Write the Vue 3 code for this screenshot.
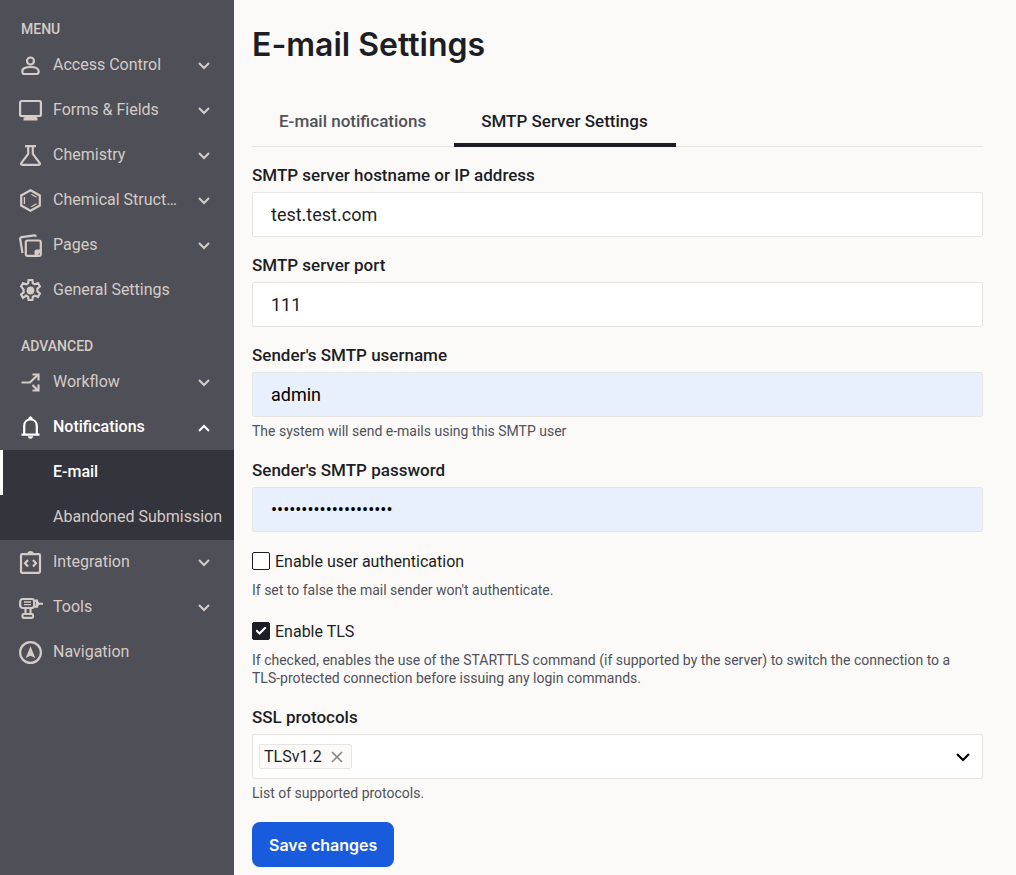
<script setup>
import { ref } from 'vue'

const menu = [
  { label: 'Access Control', icon: 'person', expandable: true },
  { label: 'Forms & Fields', icon: 'monitor', expandable: true },
  { label: 'Chemistry', icon: 'flask', expandable: true },
  { label: 'Chemical Struct…', icon: 'hexagon', expandable: true },
  { label: 'Pages', icon: 'pages', expandable: true },
  { label: 'General Settings', icon: 'gear' },
]
const advanced = [
  { label: 'Workflow', icon: 'workflow', expandable: true },
  {
    label: 'Notifications',
    icon: 'bell',
    expandable: true,
    open: true,
    children: [{ label: 'E-mail', current: true }, { label: 'Abandoned Submission' }],
  },
  { label: 'Integration', icon: 'integration', expandable: true },
  { label: 'Tools', icon: 'drill', expandable: true },
  { label: 'Navigation', icon: 'compass' },
]
const sections = [
  { title: 'Menu', items: menu },
  { title: 'Advanced', items: advanced },
]

const icons = {
  person:
    '<circle cx="11.5" cy="7" r="3.500"/><path d="M3.300 17.500c0-3.200 3.600-4.500 8.200-4.500s8.200 1.300 8.200 4.500c0 1.700-.8 2.500-2.200 2.500H5.500c-1.400 0-2.200-.8-2.200-2.500z"/>',
  monitor:
    '<rect x="1.100" y="2" width="20.800" height="15" rx="1.500"/><path class="solid" d="M5.500 17h12v1.500h1v3H4.500v-3h1z"/>',
  flask:
    '<path d="M6 2.200h11M9.200 2v8L2.400 18.900c-.8 1.200-.3 2 1 2h16.200c1.300 0 1.800-.8 1-2L13.800 10V2"/>',
  hexagon:
    '<path d="M11.500 1.300l9.300 5.200v10l-9.300 5.200-9.300-5.200v-10z"/><path class="thin" d="M5.400 8v7M12.300 5.200l5.300 3M12.300 17.800l5.300-3"/>',
  pages:
    '<rect x="6.800" y="6.500" width="15" height="15.300" rx="1.800"/><path class="solid" d="M22 15.500h-4.500q-2 0-2 2v5l2 0L22 17.500z"/><path d="M3.500 19L1.200 5.200q-.3-1.800 1.500-2.100L15.300 1.300q1.300-.2 1.600 1.500"/>',
  gear:
    '<path d="M9.600 1h3.800l.5 3.200 2 1.200 3.100-1.200 1.900 3.300-2.500 2.100v2.800l2.500 2.100-1.900 3.300-3.100-1.200-2 1.200-.5 3.200H9.600l-.5-3.200-2-1.200L4 18.800l-1.900-3.300 2.500-2.100v-2.800L2.100 7.500 4 4.200l3.100 1.200 2-1.200z"/><circle class="solid" cx="11.500" cy="11.500" r="3.900"/>',
  workflow:
    '<path d="M2.500 11.500h8.500l8-8"/><path d="M13.500 3.500h6v6M13.500 14l5.500 5.500M19.500 13.500v6h-6"/>',
  bell:
    '<path d="M2.500 18.700h18M5.200 18.500V10c0-4 2.700-6.500 6.300-6.500s6.300 2.500 6.300 6.500v8.500"/><path class="solid" d="M11.500 0l2.200 2v2H9.300V2zM8.800 20.200h5.400q-.6 2.600-2.700 2.600t-2.700-2.600z"/>',
  integration:
    '<rect x="2" y="3.200" width="19" height="18.600" rx="1.200"/><path d="M9 9l-3 3.300 3 3.300M14 9l3 3.300-3 3.300"/><path class="solid" d="M8 3q.5-3 3.500-3t3.500 3z"/>',
  drill:
    '<rect x="1.200" y="3" width="14" height="9" rx="2.500"/><path class="thin" d="M5 6h7M5 8.700h7"/><path d="M15.500 4.700h2.500v6h-2.500M6.500 12v6M11.500 12v6"/><path class="solid" d="M18 4.500l2.500 2.200H24v2h-3.500L18 10.900z"/><rect x="3.500" y="18" width="10.500" height="3.800" rx="1"/>',
  compass:
    '<circle cx="11.500" cy="11.500" r="10.400"/><path class="solid" d="M11.500 5.300l4.800 11.700-4.800-2.300-4.800 2.300z"/>',
}

const tabs = ['E-mail notifications', 'SMTP Server Settings']
const activeTab = ref(tabs[1])

const hostname = ref('test.test.com')
const port = ref('111')
const username = ref('admin')
const password = ref('abcdefghijklmnopqrst')
const authentication = ref(false)
const tls = ref(true)
const allProtocols = ['TLSv1.1', 'TLSv1.2', 'TLSv1.3']
const protocols = ref(['TLSv1.2'])
const nextProtocol = ref('')

function addProtocol() {
  if (nextProtocol.value && !protocols.value.includes(nextProtocol.value)) {
    protocols.value.push(nextProtocol.value)
  }
  nextProtocol.value = ''
}
function removeProtocol(name) {
  protocols.value = protocols.value.filter((p) => p !== name)
}
</script>

<template>
  <div class="page">
    <nav class="sidebar">
      <section v-for="section in sections" :key="section.title" class="group">
        <h2 class="group-title">{{ section.title }}</h2>
        <ul class="items">
          <li v-for="item in section.items" :key="item.label">
            <a href="#" class="item" :class="{ open: item.open }">
              <svg class="icon" viewBox="0 0 23 23" aria-hidden="true" v-html="icons[item.icon]"></svg>
              <span class="item-label">{{ item.label }}</span>
              <svg v-if="item.expandable" class="chevron" viewBox="0 0 12 12" aria-hidden="true">
                <path :d="item.open ? 'M1 9l5-5 5 5' : 'M1 3l5 5 5-5'" />
              </svg>
            </a>
            <ul v-if="item.children" class="submenu">
              <li v-for="child in item.children" :key="child.label">
                <a href="#" class="subitem" :class="{ current: child.current }">{{ child.label }}</a>
              </li>
            </ul>
          </li>
        </ul>
      </section>
    </nav>

    <main class="content">
      <h1 class="title">E-mail Settings</h1>
      <div class="tabs" role="tablist">
        <button
          v-for="tab in tabs"
          :key="tab"
          type="button"
          role="tab"
          class="tab"
          :class="{ active: tab === activeTab }"
          :aria-selected="tab === activeTab"
          @click="activeTab = tab"
        >{{ tab }}</button>
      </div>

      <form class="form" @submit.prevent>
        <div class="field">
          <label class="label" for="hostname">SMTP server hostname or IP address</label>
          <input id="hostname" v-model="hostname" class="input" type="text" />
        </div>
        <div class="field">
          <label class="label" for="port">SMTP server port</label>
          <input id="port" v-model="port" class="input" type="text" />
        </div>
        <div class="field">
          <label class="label" for="username">Sender's SMTP username</label>
          <input id="username" v-model="username" class="input filled" type="text" />
          <p class="help">The system will send e-mails using this SMTP user</p>
        </div>
        <div class="field">
          <label class="label" for="password">Sender's SMTP password</label>
          <input id="password" v-model="password" class="input filled" type="password" />
        </div>
        <div class="field">
          <div class="check">
            <input id="authentication" v-model="authentication" type="checkbox" class="checkbox" />
            <label for="authentication">Enable user authentication</label>
          </div>
          <p class="help">If set to false the mail sender won't authenticate.</p>
        </div>
        <div class="field">
          <div class="check">
            <input id="tls" v-model="tls" type="checkbox" class="checkbox" />
            <label for="tls">Enable TLS</label>
          </div>
          <p class="help">If checked, enables the use of the STARTTLS command (if supported by the server) to switch the connection to a <span class="keep">TLS-protected</span> connection before issuing any login commands.</p>
        </div>
        <div class="field">
          <label class="label" for="protocols">SSL protocols</label>
          <div class="multiselect">
            <span v-for="name in protocols" :key="name" class="chip">
              {{ name }}
              <button type="button" class="remove" :aria-label="'Remove ' + name" @click="removeProtocol(name)">
                <svg viewBox="0 0 12 12" aria-hidden="true"><path d="M1 1l10 10M11 1L1 11" /></svg>
              </button>
            </span>
            <select id="protocols" v-model="nextProtocol" class="select" @change="addProtocol">
              <option value=""></option>
              <option v-for="name in allProtocols" :key="name">{{ name }}</option>
            </select>
            <svg class="arrow" viewBox="0 0 14 14" aria-hidden="true"><path d="M1 4l6 6 6-6" /></svg>
          </div>
          <p class="help">List of supported protocols.</p>
        </div>
        <button type="submit" class="save">Save changes</button>
      </form>
    </main>
  </div>
</template>

<style>
body {
  margin: 0;
  background: #fbfaf8;
}
</style>

<style scoped>
.page {
  display: flex;
  min-height: 100vh;
  font-family: Roboto, "Liberation Sans", sans-serif;
  font-size: 16px;
  color: #1d1e25;
}
.page * {
  box-sizing: border-box;
}
button,
input,
select {
  font: inherit;
  color: inherit;
  margin: 0;
}

.sidebar {
  flex: none;
  width: 234px;
  padding-top: 16px;
  background: #4f4f57;
  color: #d4ccc6;
}
.group {
  padding-bottom: 20px;
}
.group-title {
  margin: 0;
  padding: 0 0 1px 21px;
  font-size: 14px;
  line-height: 26px;
  font-weight: 500;
  text-transform: uppercase;
}
.items,
.submenu {
  margin: 0;
  padding: 0;
  list-style: none;
}
.item {
  display: flex;
  align-items: center;
  height: 45px;
  padding: 0 24px 0 19px;
  color: inherit;
  text-decoration: none;
}
.item.open {
  color: #fff;
  font-weight: 500;
}
.icon {
  flex: none;
  width: 23px;
  height: 23px;
  overflow: visible;
  fill: none;
  stroke: currentColor;
  stroke-width: 2.2;
}
.icon :deep(.solid) {
  fill: currentColor;
  stroke: none;
}
.icon :deep(.thin) {
  stroke-width: 1.3;
}
.item-label {
  margin-left: 11px;
  padding-bottom: 2px;
  white-space: nowrap;
}
.chevron {
  width: 12px;
  height: 12px;
  margin-left: auto;
  fill: none;
  stroke: currentColor;
  stroke-width: 2;
}
.submenu {
  background: #34343d;
}
.subitem {
  display: block;
  height: 45px;
  padding-left: 53px;
  line-height: 43px;
  white-space: nowrap;
  color: inherit;
  text-decoration: none;
}
.subitem.current {
  padding-left: 50px;
  border-left: 3px solid #fff;
  color: #fff;
  font-weight: 500;
}

.content {
  flex: 1;
  min-width: 0;
  padding: 24px 33px 8px 18px;
}
.title,
.save {
  font-family: Inter, Roboto, sans-serif;
  font-weight: 600;
}
.title {
  margin: 0;
  font-size: 32px;
  line-height: 42px;
}
.tabs {
  display: flex;
  height: 51px;
  margin-top: 30px;
  border-bottom: 1px solid #e7e5e2;
}
.tab {
  height: 51px;
  padding: 2px 28px 0 27px;
  border: 0;
  border-bottom: 4px solid transparent;
  background: none;
  font-size: 17px;
  font-weight: 500;
  color: #50515a;
}
.tab.active {
  border-bottom-color: #1d1e25;
  color: #1d1e25;
}

.form {
  padding-top: 18px;
}
.field {
  margin-bottom: 18px;
}
.field:has(.help) {
  margin-bottom: 20px;
}
.field:has(.check) + .field:has(.check) {
  margin-top: 21px;
}
.label {
  display: block;
  margin-bottom: 7px;
  font-size: 17px;
  line-height: 20px;
  font-weight: 500;
}
.input {
  display: block;
  width: 100%;
  height: 45px;
  padding: 0 18px;
  border: 1px solid #e7e5e2;
  border-radius: 2px;
  background: #fff;
  font-size: 18px;
}
.input.filled {
  background: #e8effd;
  color: #000;
}
.help {
  margin: 5px 0 0;
  font-size: 14px;
  line-height: 18px;
  color: #50515a;
}
.keep {
  white-space: nowrap;
}
.check {
  display: flex;
  align-items: center;
  gap: 5px;
  height: 22px;
  margin-bottom: 9px;
}
.checkbox {
  appearance: none;
  display: grid;
  place-items: center;
  width: 18px;
  height: 18px;
  border: 1px solid #1d1e25;
  border-radius: 2px;
  background: #fff;
}
.checkbox:checked {
  background: #1d1e25;
}
.checkbox:checked::after {
  content: "";
  width: 11px;
  height: 9px;
  background: #fff;
  clip-path: polygon(0 50%, 14% 34%, 36% 60%, 86% 0, 100% 16%, 37% 94%);
}
.multiselect {
  display: flex;
  align-items: center;
  height: 45px;
  padding: 0 12px 0 6px;
  border: 1px solid #e7e5e2;
  border-radius: 2px;
  background: #fff;
}
.chip {
  display: flex;
  align-items: center;
  gap: 9px;
  height: 25px;
  padding: 0 8px 0 4px;
  border: 1px solid #e7e5e2;
  border-radius: 2px;
  background: #fbfaf8;
}
.remove {
  display: block;
  padding: 0;
  border: 0;
  background: none;
  color: #85827a;
}
.remove svg,
.arrow {
  display: block;
  width: 12px;
  height: 12px;
  fill: none;
  stroke: currentColor;
  stroke-width: 1.5;
}
.select {
  flex: 1;
  min-width: 0;
  height: 43px;
  appearance: none;
  border: 0;
  background: transparent;
}
.arrow {
  width: 14px;
  height: 14px;
  color: #000;
  stroke-width: 2.2;
}
.save {
  display: block;
  height: 45px;
  padding: 0 17px;
  border: 0;
  border-radius: 8px;
  background: #185bdd;
  color: #fff;
}
</style>
